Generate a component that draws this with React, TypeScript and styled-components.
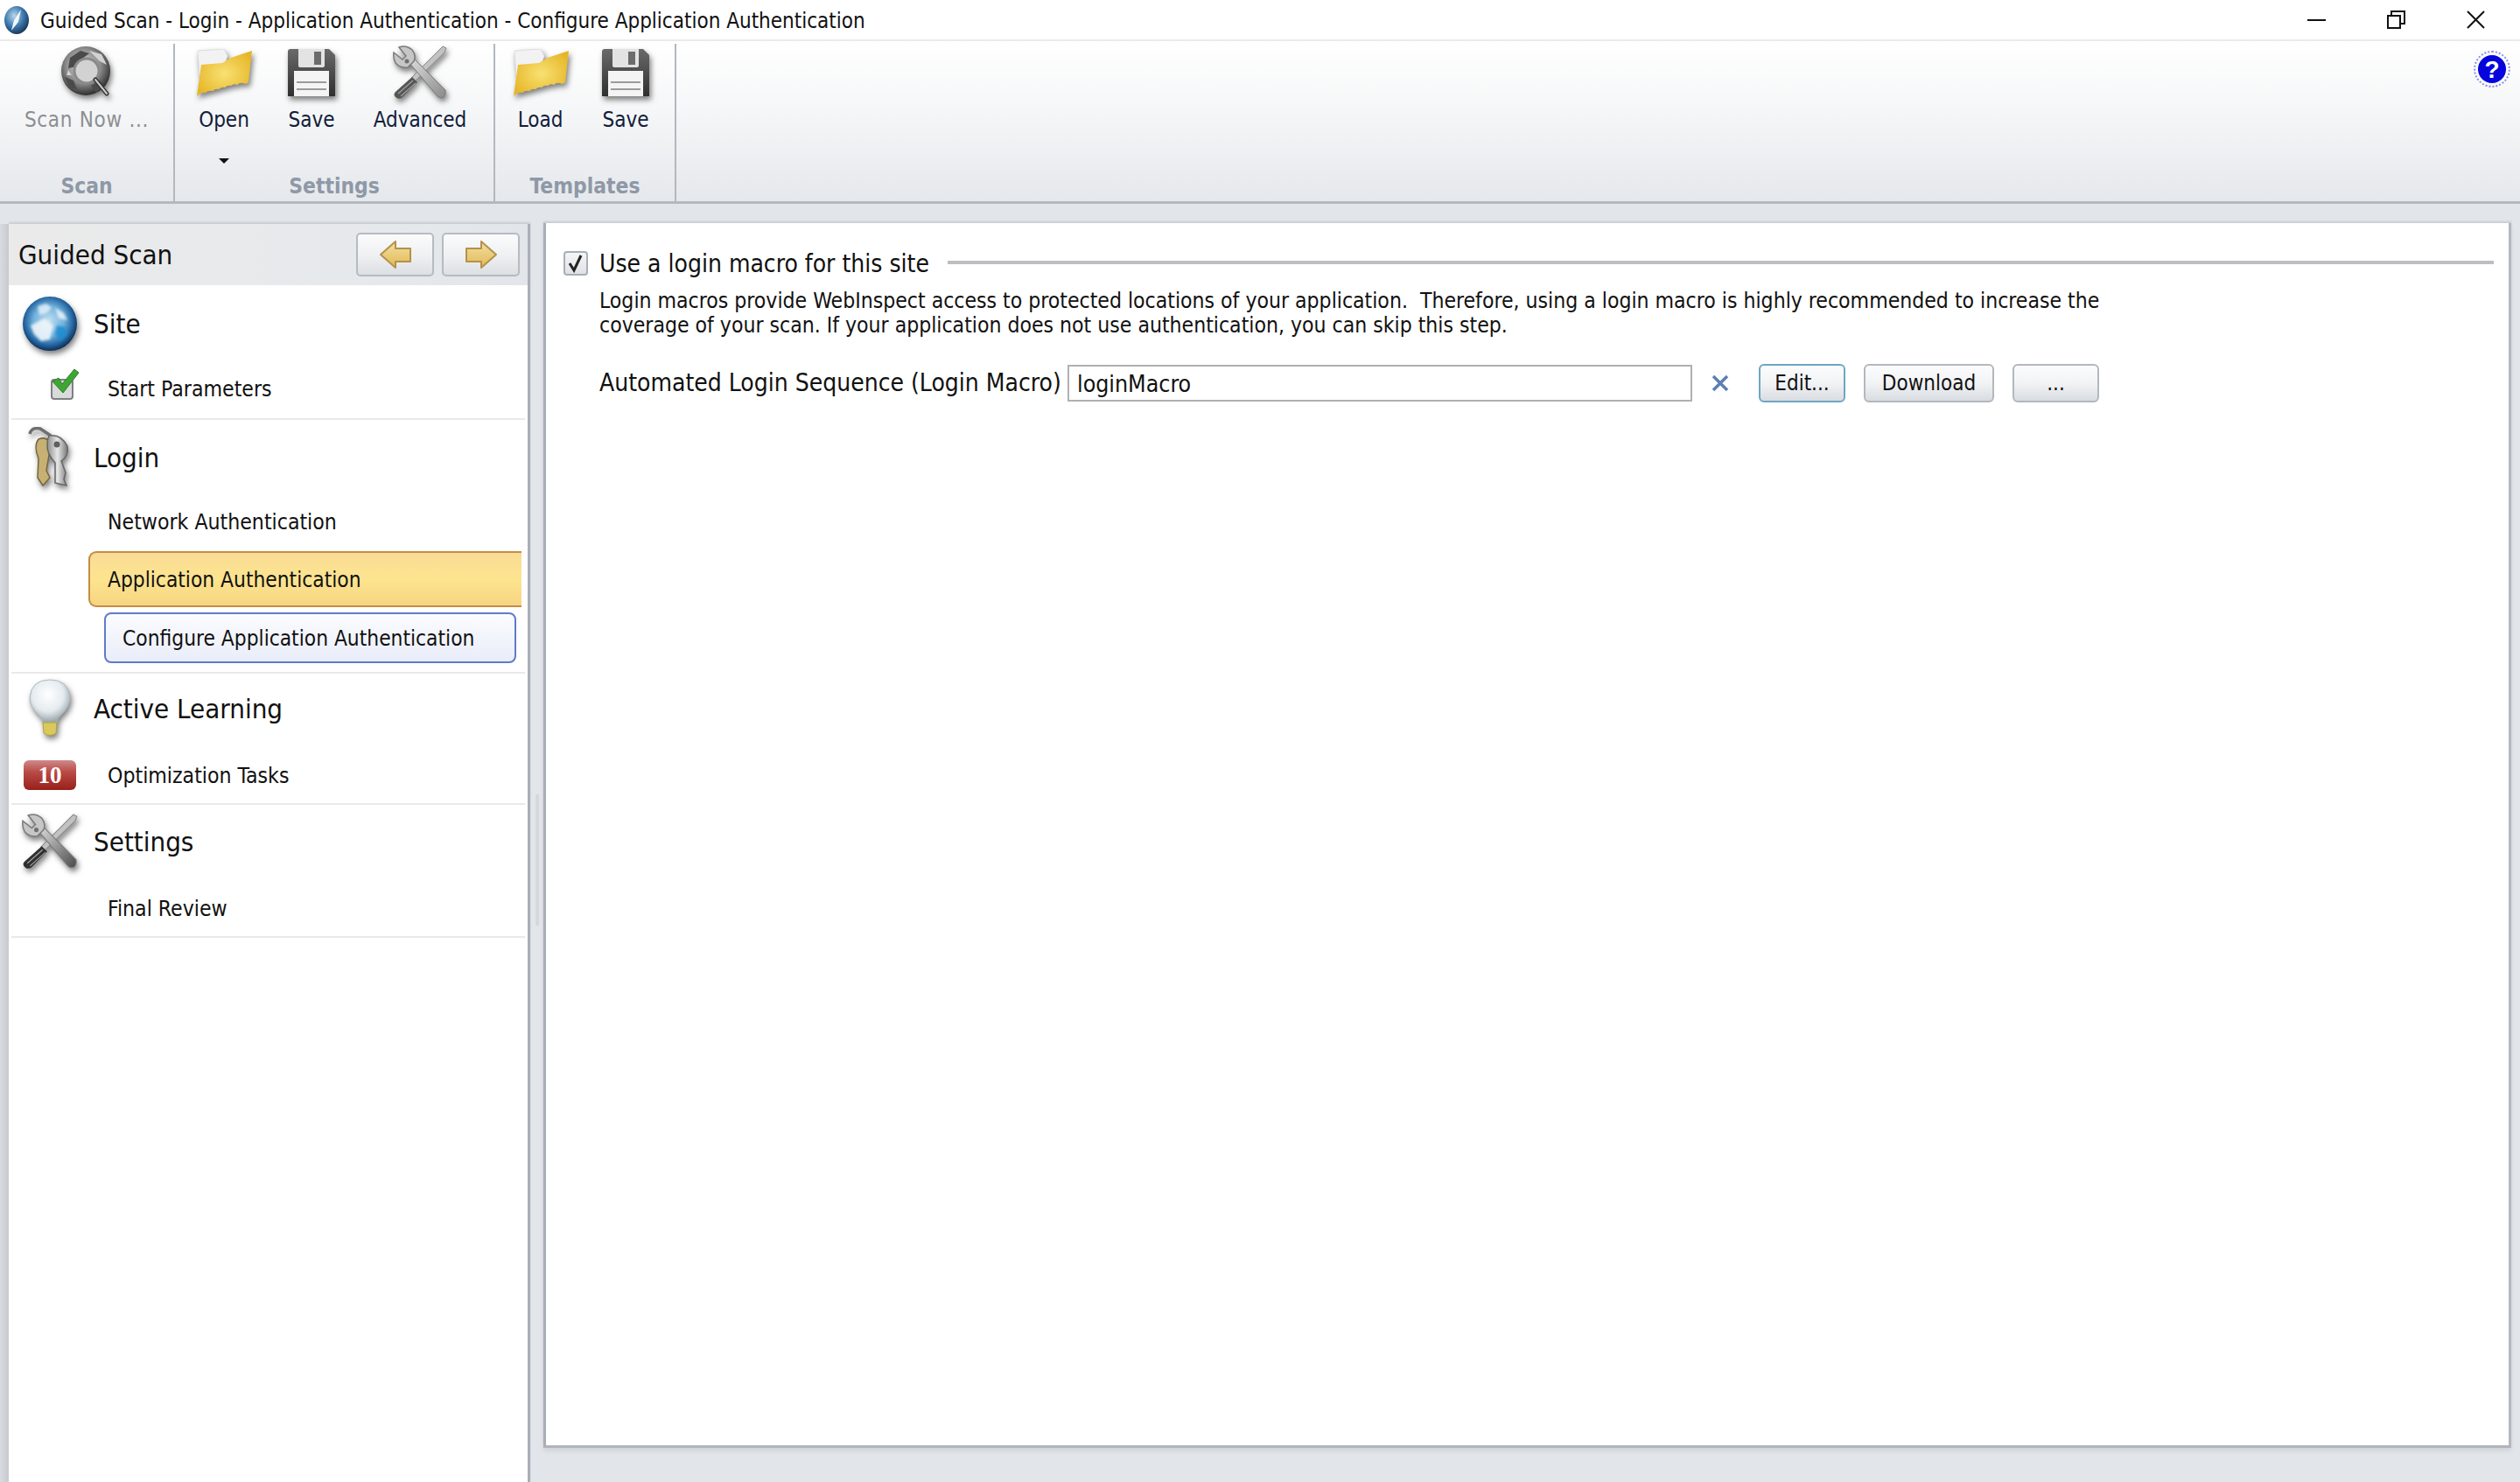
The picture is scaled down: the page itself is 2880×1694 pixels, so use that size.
import React from 'react';
import styled, { createGlobalStyle } from 'styled-components';

const GlobalStyle = createGlobalStyle`
  html, body {
    margin: 0;
    padding: 0;
    background: #fff;
  }
  body {
    font-family: "DejaVu Sans Condensed", "DejaVu Sans", "Liberation Sans", sans-serif;
    color: #111;
  }
`;

const Window = styled.div`
  width: 2880px;
  height: 1694px;
  display: flex;
  flex-direction: column;
  overflow: hidden;
  background: #e2e5ea;
`;

const TitleBar = styled.div`
  height: 47px;
  flex: none;
  display: flex;
  align-items: center;
  background: #fff;
  border-bottom: 2px solid #e9ebee;
  box-sizing: border-box;
  padding-left: 4px;
`;

const TitleText = styled.span`
  font-size: 24px;
  margin: 2px 0 0 12px;
  color: #111;
  white-space: nowrap;
`;

const WindowButtons = styled.div`
  margin-left: auto;
  display: flex;
  align-items: center;
  gap: 70px;
  padding-right: 40px;
`;

const Ribbon = styled.div`
  height: 186px;
  flex: none;
  display: flex;
  box-sizing: border-box;
  border-bottom: 3px solid #b4b9c0;
  background: linear-gradient(#fff 0%, #f6f7f8 40%, #e5e8ec 100%);
`;

const RibbonGroup = styled.div<{ $width: number }>`
  width: ${(p) => p.$width}px;
  flex: none;
  box-sizing: border-box;
  display: flex;
  flex-direction: column;
  align-items: center;
  margin-top: 3px;
  padding-bottom: 2px;
  border-right: 2px solid #b3b8be;
`;

const ToolRow = styled.div`
  display: flex;
  align-self: stretch;
  align-items: flex-start;
`;

const Tool = styled.div<{ $width: number; $disabled?: boolean }>`
  width: ${(p) => p.$width}px;
  flex: none;
  display: flex;
  flex-direction: column;
  align-items: center;
  padding-top: 2px;
  font-size: 24px;
  line-height: 28px;
  white-space: nowrap;
  letter-spacing: ${(p) => (p.$disabled ? '0.7px' : '0')};
  color: ${(p) => (p.$disabled ? '#8c8f93' : '#12203a')};
`;

const ToolIcon = styled.div`
  height: 62px;
  margin-bottom: 9px;
  display: flex;
  align-items: center;
  justify-content: center;
`;

const DropArrow = styled.div`
  margin-top: 30px;
  width: 0;
  height: 0;
  border-left: 6px solid transparent;
  border-right: 6px solid transparent;
  border-top: 6px solid #111;
`;

const GroupTitle = styled.div`
  margin-top: auto;
  font-size: 24.4px;
  line-height: 30px;
  font-weight: 700;
  color: #8f98a6;
`;

const HelpButton = styled.div`
  margin: 16px 16px 0 auto;
  width: 32px;
  height: 32px;
  flex: none;
  border-radius: 50%;
  background: #0505dc;
  color: #fff;
  font-family: "Liberation Sans", sans-serif;
  font-size: 28px;
  line-height: 33px;
  font-weight: 700;
  text-align: center;
  outline: 2px dotted #8a8af0;
  outline-offset: 3px;
`;

const Body = styled.div`
  flex: 1;
  display: flex;
  min-height: 0;
`;

const LeftEdge = styled.div`
  width: 10px;
  flex: none;
  margin-top: 23px;
  background: linear-gradient(90deg, #d9dbde, #c6cad0);
`;

const Sidebar = styled.div`
  width: 596px;
  flex: none;
  margin-top: 23px;
  box-sizing: border-box;
  background: #fff;
  border-right: 3px solid #a9aeb6;
  box-shadow: 0 -2px 2px #c9cdd3;
`;

const SidebarHeader = styled.div`
  height: 70px;
  display: flex;
  align-items: center;
  padding: 0 9px 0 11px;
  background: linear-gradient(90deg, #eaeaea, #e6e9ec 70%, #e2e5e9);
`;

const SidebarTitle = styled.span`
  font-size: 31px;
  margin-right: auto;
`;

const NavButton = styled.button`
  width: 89px;
  height: 50px;
  margin-left: 9px;
  padding: 0;
  display: flex;
  align-items: center;
  justify-content: center;
  border: 2px solid #b6bbc2;
  border-radius: 5px;
  background: linear-gradient(#fafbfb, #f0f1f3 50%, #dcdfe3);
`;

const Section = styled.div<{ $top: number; $bottom?: number }>`
  margin: 0 3px;
  padding-top: ${(p) => p.$top}px;
  padding-bottom: ${(p) => p.$bottom ?? 0}px;
  border-bottom: 2px solid #e9e9e9;
`;

const SectionHead = styled.div`
  height: 80px;
  display: flex;
  align-items: center;
  font-size: 31px;
`;

const HeadIcon = styled.div`
  width: 88px;
  margin-right: 6px;
  flex: none;
  display: flex;
  align-items: center;
  justify-content: center;
`;

const StepRow = styled.div<{ $height?: number; $nudge?: number }>`
  height: ${(p) => p.$height ?? 68}px;
  box-sizing: border-box;
  padding-top: ${(p) => p.$nudge ?? 0}px;
  display: flex;
  align-items: center;
  font-size: 24.6px;
`;

const StepSlot = styled.div<{ $indent?: number; $lift?: number }>`
  width: 110px;
  flex: none;
  box-sizing: border-box;
  padding-left: ${(p) => p.$indent ?? 0}px;
  margin-top: ${(p) => -(p.$lift ?? 0)}px;
  display: flex;
  align-items: center;
`;

const ActiveStep = styled.div`
  height: 64px;
  width: 495px;
  margin: 1px 0 0 88px;
  box-sizing: border-box;
  padding-left: 20px;
  display: flex;
  align-items: center;
  font-size: 24.3px;
  border: 2px solid #c58c45;
  border-right: 0;
  border-radius: 9px 0 0 9px;
  background: linear-gradient(#f8dc95, #fde48f 50%, #f6d582);
`;

const ActiveSubStep = styled.div`
  height: 58px;
  width: 471px;
  margin: 6px 0 10px 106px;
  box-sizing: border-box;
  padding-left: 19px;
  display: flex;
  align-items: center;
  font-size: 24.3px;
  border: 2px solid #5f7bc8;
  border-radius: 8px;
  background: linear-gradient(#fbfcfe, #e9edf9);
`;

const CountBadge = styled.div`
  width: 60px;
  height: 34px;
  border-radius: 6px;
  display: flex;
  align-items: center;
  justify-content: center;
  color: #fff;
  font-family: "Liberation Serif", serif;
  font-weight: 700;
  font-size: 27px;
  background: linear-gradient(#cf8a8a 0%, #b94a45 40%, #98201a 100%);
`;

const Gutter = styled.div`
  width: 15px;
  flex: none;
  display: flex;
  justify-content: center;
  padding-top: 675px;
  box-sizing: border-box;
`;

const Grip = styled.div`
  width: 4px;
  height: 150px;
  background: #d5d8dd;
`;

const Content = styled.div`
  width: 2249px;
  height: 1400px;
  flex: none;
  margin-top: 22px;
  box-sizing: border-box;
  padding: 30px 17px 0 20px;
  background: #fff;
  border-left: 3px solid #a9aeb6;
  border-right: 3px solid #b4b9c0;
  border-bottom: 3px solid #b0b5bc;
  box-shadow: 0 -2px 2px #c9cdd3, 0 4px 4px #d2d6db;
`;

const LegendRow = styled.div`
  display: flex;
  align-items: center;
  height: 32px;
`;

const CheckBox = styled.div`
  width: 28px;
  height: 28px;
  flex: none;
  box-sizing: border-box;
  display: flex;
  align-items: center;
  justify-content: center;
  border: 2px solid #a9aeb6;
  border-radius: 4px;
  background: linear-gradient(#f4f5f7, #dfe2e7);
`;

const LegendLabel = styled.span`
  font-size: 28px;
  margin-left: 13px;
  white-space: nowrap;
`;

const LegendRule = styled.div`
  flex: 1;
  height: 4px;
  margin: -3px 0 0 21px;
  background: #bcbec1;
`;

const Description = styled.p`
  margin: 13px 0 0 41px;
  width: 1800px;
  font-size: 24.55px;
  line-height: 28px;
  white-space: pre-wrap;
`;

const MacroRow = styled.div`
  display: flex;
  align-items: center;
  height: 44px;
  margin: 30px 0 0 41px;
`;

const MacroLabel = styled.span`
  font-size: 28px;
  width: 535px;
  flex: none;
  margin-top: -2px;
  white-space: nowrap;
`;

const MacroInput = styled.div`
  width: 714px;
  height: 42px;
  flex: none;
  box-sizing: border-box;
  padding-left: 9px;
  display: flex;
  align-items: center;
  font-size: 26.5px;
  border: 2px solid #aeb0b3;
  background: #fff;
`;

const ClearMark = styled.div`
  width: 76px;
  flex: none;
  box-sizing: border-box;
  padding-right: 12px;
  display: flex;
  justify-content: center;
`;

const ActionButton = styled.button<{ $width: number; $focused?: boolean }>`
  width: ${(p) => p.$width}px;
  height: 44px;
  flex: none;
  margin-right: 21px;
  padding: 0;
  color: #111;
  font-family: inherit;
  font-size: 24px;
  border: 2px solid ${(p) => (p.$focused ? '#6ea6c2' : '#b3b8be')};
  border-radius: 6px;
  background: linear-gradient(#fcfcfd, #f2f3f5 50%, #d8dce1);
`;

const Art = styled.svg`
  display: block;
  filter: drop-shadow(2px 4px 3px rgba(0, 0, 0, 0.5));
`;

const AppGlobe = () => (
  <svg width="30" height="34" viewBox="0 0 30 34">
    <defs>
      <radialGradient id="ag" cx="40%" cy="35%" r="70%">
        <stop offset="0" stopColor="#b9d8ec" />
        <stop offset="0.55" stopColor="#3a78ae" />
        <stop offset="1" stopColor="#14304f" />
      </radialGradient>
    </defs>
    <ellipse cx="15" cy="17" rx="14" ry="16" fill="url(#ag)" />
    <path d="M20 5 L12 17 L9 29 L17 19 Z" fill="#f4f6f8" />
  </svg>
);

const ScanGlobeIcon = () => (
  <Art width="62" height="62" viewBox="0 0 62 62">
    <defs>
      <radialGradient id="sg" cx="45%" cy="40%" r="60%">
        <stop offset="0" stopColor="#e0e0e0" />
        <stop offset="0.6" stopColor="#8a8a8a" />
        <stop offset="1" stopColor="#2e2e2e" />
      </radialGradient>
    </defs>
    <circle cx="30" cy="29" r="28" fill="url(#sg)" />
    <path d="M12 14 L24 6 L34 9 L26 15 L20 24 L10 26 Z M36 46 L46 40 L50 46 L42 54 Z M6 36 L16 40 L20 50 L12 48 Z" fill="#4a4a4a" />
    <path d="M34 6 L48 10 L54 22 L46 18 Z M10 28 L14 34 L8 34 Z" fill="#d2d2d2" />
    <circle cx="31" cy="29" r="14" fill="#d2d2d2" stroke="#8a8a8a" strokeWidth="3" />
    <path d="M41 39 L54 55" stroke="#333" strokeWidth="5" strokeLinecap="round" />
    <path d="M41 39 L54 55" stroke="#c9c9c9" strokeWidth="2" strokeLinecap="round" />
  </Art>
);

const FolderIcon = () => (
  <Art width="64" height="54" viewBox="0 0 64 54">
    <defs>
      <radialGradient id="fo" cx="50%" cy="50%" r="60%">
        <stop offset="0" stopColor="#f8e173" />
        <stop offset="1" stopColor="#e6b526" />
      </radialGradient>
    </defs>
    <path d="M2 2 L32 0 L36 8 L28 30 L4 30 Z" fill="#f2f2f2" stroke="#ddd" strokeWidth="1" />
    <path d="M6 18 L30 16 L40 10 L64 2 L60 38 Q57 41 54 39 Q50 38 47 41 Q43 39 40 42 Q36 41 33 44 Q29 43 26 46 Q22 45 19 48 Q14 47 11 50 Q6 49 1 54 Z" fill="url(#fo)" />
  </Art>
);

const FloppyIcon = () => (
  <Art width="56" height="54" viewBox="0 0 56 54">
    <defs>
      <linearGradient id="fl" x1="0" y1="0" x2="0" y2="1">
        <stop offset="0" stopColor="#6a6a6a" />
        <stop offset="1" stopColor="#2f2f2f" />
      </linearGradient>
    </defs>
    <path d="M1 3 Q1 0 4 0 L48 0 L55 7 L55 54 L1 54 Z" fill="url(#fl)" />
    <path d="M13 0 L43 0 L43 19 Q43 21 41 21 L15 21 Q13 21 13 19 Z" fill="#e3e3e3" />
    <rect x="31" y="3" width="8" height="15" fill="#6c6c6c" />
    <path d="M8 25 L48 25 L48 54 L8 54 Z" fill="#f4f4f4" />
    <path d="M11 38 H45 M11 46 H45" stroke="#9b9b9b" strokeWidth="2" />
  </Art>
);

const ToolsIcon = ({ size = 64, dark }: { size?: number; dark?: boolean }) => (
  <Art width={size} height={size} viewBox="0 0 64 64">
    <defs>
      <linearGradient id={dark ? 'tld' : 'tl'} x1="0" y1="0" x2="1" y2="1">
        <stop offset="0" stopColor="#dcdcdc" />
        <stop offset="1" stopColor={dark ? '#4a4a4a' : '#8a8a8a'} />
      </linearGradient>
    </defs>
    <path d="M58 2 L62 4 L60 9 L26 42 L22 38 Z" fill="#c2c2c2" stroke="#858585" strokeWidth="1" />
    <path d="M23 37 L29 43 L11 61 Q7 63 4 60 Q1 57 4 54 Z" fill={dark ? '#303030' : '#555'} />
    <path d="M7 56 L24 41 M10 59 L27 44" stroke="#a0a0a0" strokeWidth="1.2" />
    <path d="M20 21 L25 16 L61 52 Q62 57 59 60 Q55 62 52 59 Z" fill={`url(#${dark ? 'tld' : 'tl'})`} stroke="#7a7a7a" strokeWidth="1" />
    <path d="M2 9 L12 17 L16 13 L8 3 Q16 0 23 6 Q28 12 25 19 L18 26 Q9 27 4 21 Q1 15 2 9 Z" fill="#c6c6c6" stroke="#7b7b7b" strokeWidth="1.5" />
    <circle cx="17" cy="19" r="2.5" fill="#707070" />
  </Art>
);

const EarthIcon = () => (
  <Art width="64" height="64" viewBox="0 0 64 64">
    <defs>
      <radialGradient id="ea" cx="48%" cy="45%" r="56%">
        <stop offset="0" stopColor="#c5e0f1" />
        <stop offset="0.5" stopColor="#6fb0dc" />
        <stop offset="0.8" stopColor="#22649f" />
        <stop offset="1" stopColor="#0b2a50" />
      </radialGradient>
      <filter id="soft"><feGaussianBlur stdDeviation="1.6" /></filter>
    </defs>
    <circle cx="32" cy="32" r="31" fill="url(#ea)" />
    <g filter="url(#soft)">
      <path d="M18 12 L28 9 L34 14 L28 20 L20 22 Z" fill="#e8f3fa" opacity="0.8" />
      <path d="M40 34 L50 36 L52 44 L44 52 L38 44 Z" fill="#1f8ed0" opacity="0.9" />
      <path d="M10 34 L26 26 L36 34 L32 50 L22 52 L14 44 Z" fill="#eef5fa" opacity="0.9" />
      <path d="M38 14 L48 20 L52 28 L42 26 Z" fill="#eaf3f9" opacity="0.85" />
    </g>
  </Art>
);

const KeysIcon = () => (
  <Art width="50" height="70" viewBox="0 0 50 70">
    <defs>
      <linearGradient id="ks" x1="0" y1="0" x2="1" y2="0">
        <stop offset="0" stopColor="#8d8d8d" />
        <stop offset="0.5" stopColor="#e6e6e6" />
        <stop offset="1" stopColor="#777" />
      </linearGradient>
    </defs>
    <path d="M2 8 Q4 0 14 2 L26 10" fill="none" stroke="#6f6f6f" strokeWidth="3.5" />
    <path d="M12 14 Q22 10 26 20 L24 32 L21 50 L25 58 L17 67 L11 58 L12 36 Q6 22 12 14 Z" fill="#c7b073" stroke="#74663d" strokeWidth="1.5" />
    <path d="M24 10 Q38 8 45 22 Q47 33 38 39 L43 52 L41 60 L44 67 L31 64 L31 41 Q21 30 22 20 Q22 14 24 10 Z" fill="url(#ks)" stroke="#666" strokeWidth="1.5" />
    <circle cx="33" cy="20" r="3.5" fill="#5e5e5e" />
  </Art>
);

const BulbIcon = () => (
  <Art width="48" height="68" viewBox="0 0 48 68">
    <defs>
      <radialGradient id="bu" cx="45%" cy="35%" r="65%">
        <stop offset="0" stopColor="#fff" />
        <stop offset="0.6" stopColor="#e4ebef" />
        <stop offset="1" stopColor="#94a2a8" />
      </radialGradient>
    </defs>
    <path d="M24 1 Q45 1 47 21 Q47 32 37 41 Q32 45 32 50 L16 50 Q16 45 11 41 Q1 32 1 21 Q3 1 24 1 Z" fill="url(#bu)" stroke="#aeb8bc" strokeWidth="1" />
    <path d="M16 50 H32 L31 62 Q24 67 17 62 Z" fill="#d9c95c" stroke="#b3a23c" strokeWidth="1" />
  </Art>
);

const DoneIcon = () => (
  <svg width="34" height="36" viewBox="0 0 34 36" style={{ display: 'block' }}>
    <rect x="2" y="13" width="24" height="22" rx="3" fill="#d9dadb" stroke="#7e8082" strokeWidth="2" />
    <path d="M3 15 L10 11 L14 18 L28 1 L33 5 L15 28 Z" fill="#3fa535" stroke="#2b7d26" strokeWidth="1" />
  </svg>
);

const NavArrow = ({ flip }: { flip?: boolean }) => (
  <svg width="38" height="34" viewBox="0 0 38 34" style={{ display: 'block', transform: flip ? 'scaleX(-1)' : undefined }}>
    <defs>
      <linearGradient id="na" x1="0" y1="0" x2="0" y2="1">
        <stop offset="0" stopColor="#f3dfa2" />
        <stop offset="1" stopColor="#e2b955" />
      </linearGradient>
    </defs>
    <path d="M2 17 L19 2 L19 10 L36 10 L36 25 L19 25 L19 32 Z" fill="url(#na)" stroke="#b4924a" strokeWidth="2" strokeLinejoin="round" />
  </svg>
);

const App: React.FC = () => (
  <Window>
    <GlobalStyle />
    <TitleBar>
      <AppGlobe />
      <TitleText>Guided Scan - Login - Application Authentication - Configure Application Authentication</TitleText>
      <WindowButtons>
        <svg width="21" height="21" viewBox="0 0 21 21"><path d="M0 11 H21" stroke="#111" strokeWidth="2" /></svg>
        <svg width="21" height="21" viewBox="0 0 21 21" fill="none" stroke="#111" strokeWidth="2"><rect x="1" y="6" width="14" height="14" /><path d="M5 6 V1 H20 V15 H15" /></svg>
        <svg width="21" height="21" viewBox="0 0 21 21" fill="none" stroke="#111" strokeWidth="2"><path d="M1 1 L20 20 M20 1 L1 20" /></svg>
      </WindowButtons>
    </TitleBar>

    <Ribbon>
      <RibbonGroup $width={200}>
        <ToolRow>
          <Tool $width={198} $disabled>
            <ToolIcon><ScanGlobeIcon /></ToolIcon>
            Scan Now ...
          </Tool>
        </ToolRow>
        <GroupTitle>Scan</GroupTitle>
      </RibbonGroup>
      <RibbonGroup $width={366}>
        <ToolRow>
          <Tool $width={112}>
            <ToolIcon><FolderIcon /></ToolIcon>
            Open
            <DropArrow />
          </Tool>
          <Tool $width={88}>
            <ToolIcon><FloppyIcon /></ToolIcon>
            Save
          </Tool>
          <Tool $width={160}>
            <ToolIcon><ToolsIcon /></ToolIcon>
            Advanced
          </Tool>
        </ToolRow>
        <GroupTitle>Settings</GroupTitle>
      </RibbonGroup>
      <RibbonGroup $width={207}>
        <ToolRow>
          <Tool $width={103}>
            <ToolIcon><FolderIcon /></ToolIcon>
            Load
          </Tool>
          <Tool $width={92}>
            <ToolIcon><FloppyIcon /></ToolIcon>
            Save
          </Tool>
        </ToolRow>
        <GroupTitle>Templates</GroupTitle>
      </RibbonGroup>
      <HelpButton>?</HelpButton>
    </Ribbon>

    <Body>
      <LeftEdge />
      <Sidebar>
        <SidebarHeader>
          <SidebarTitle>Guided Scan</SidebarTitle>
          <NavButton><NavArrow /></NavButton>
          <NavButton><NavArrow flip /></NavButton>
        </SidebarHeader>

        <Section $top={4}>
          <SectionHead>
            <HeadIcon><EarthIcon /></HeadIcon>
            Site
          </SectionHead>
          <StepRow>
            <StepSlot $indent={44} $lift={10}><DoneIcon /></StepSlot>
            Start Parameters
          </StepRow>
        </Section>

        <Section $top={3}>
          <SectionHead>
            <HeadIcon><KeysIcon /></HeadIcon>
            Login
          </SectionHead>
          <StepRow $height={66}>
            <StepSlot />
            Network Authentication
          </StepRow>
          <ActiveStep>Application Authentication</ActiveStep>
          <ActiveSubStep>Configure Application Authentication</ActiveSubStep>
        </Section>

        <Section $top={0}>
          <SectionHead>
            <HeadIcon><BulbIcon /></HeadIcon>
            Active Learning
          </SectionHead>
          <StepRow $nudge={4}>
            <StepSlot $indent={14}><CountBadge>10</CountBadge></StepSlot>
            Optimization Tasks
          </StepRow>
        </Section>

        <Section $top={2}>
          <SectionHead>
            <HeadIcon><ToolsIcon size={66} dark /></HeadIcon>
            Settings
          </SectionHead>
          <StepRow $nudge={4}>
            <StepSlot />
            Final Review
          </StepRow>
        </Section>
      </Sidebar>

      <Gutter><Grip /></Gutter>

      <Content>
        <LegendRow>
          <CheckBox>
            <svg width="20" height="22" viewBox="0 0 20 22"><path d="M3 11 L8 19 L16 2" fill="none" stroke="#222" strokeWidth="3" /></svg>
          </CheckBox>
          <LegendLabel>Use a login macro for this site</LegendLabel>
          <LegendRule />
        </LegendRow>
        <Description>
          {'Login macros provide WebInspect access to protected locations of your application.  Therefore, using a login macro is highly recommended to increase the\ncoverage of your scan. If your application does not use authentication, you can skip this step.'}
        </Description>
        <MacroRow>
          <MacroLabel>Automated Login Sequence (Login Macro)</MacroLabel>
          <MacroInput>loginMacro</MacroInput>
          <ClearMark>
            <svg width="20" height="20" viewBox="0 0 20 20"><path d="M2 2 L18 18 M18 2 L2 18" stroke="#5b80b2" strokeWidth="3.5" /></svg>
          </ClearMark>
          <ActionButton $width={99} $focused>Edit...</ActionButton>
          <ActionButton $width={149}>Download</ActionButton>
          <ActionButton $width={99}>...</ActionButton>
        </MacroRow>
      </Content>
    </Body>
  </Window>
);

export default App;
